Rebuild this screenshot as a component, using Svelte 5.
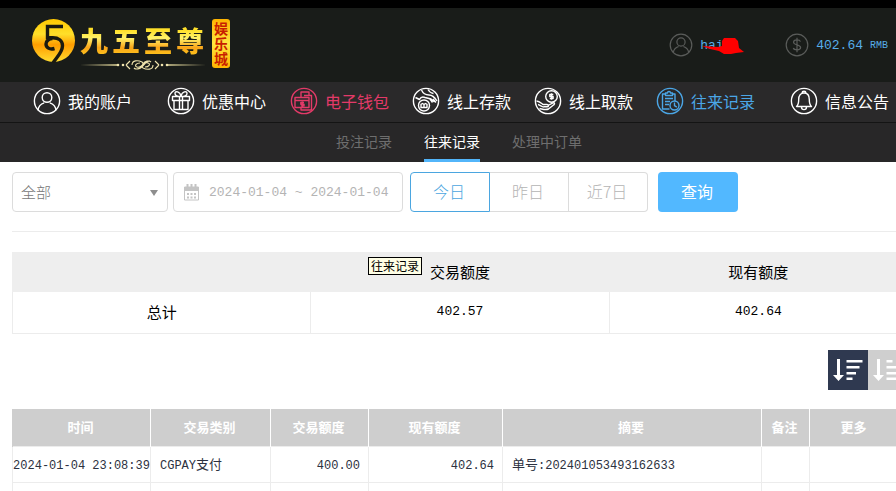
<script>
  const nav = [
    { icon: 'user', label: '我的账户' },
    { icon: 'gift', label: '优惠中心', wide: true },
    { icon: 'wallet', label: '电子钱包', tone: 'pink' },
    { icon: 'deposit', label: '线上存款' },
    { icon: 'withdraw', label: '线上取款' },
    { icon: 'record', label: '往来记录', tone: 'blue' },
    { icon: 'bell', label: '信息公告', wide: true }
  ];
  const tabs = ['投注记录', '往来记录', '处理中订单'];
  const ranges = ['今日', '昨日', '近7日'];
  const heads = ['时间', '交易类别', '交易额度', '现有额度', '摘要', '备注', '更多'];
  let tab = $state('往来记录');
  let range = $state('今日');
  let order = $state('desc');
  let dates = $state('2024-01-04 ~ 2024-01-04');
</script>

{#snippet glyph(name)}
  <svg class="icon" viewBox="0 0 28 28" aria-hidden="true">
    <circle cx="14" cy="14" r="12.6" />
    {#if name === 'user'}
      <circle cx="14" cy="10.5" r="4.8" />
      <path d="M5 23.200c.4-4 2.600-6.200 6.200-7.400M23 23.200c-.4-4-2.600-6.200-6.200-7.400" />
    {:else if name === 'gift'}
      <path d="M5.500 9.500h17v4h-17zM7 13.500h14v9H7zM12.500 9.500v13M15.500 9.500v13M14 9.500c-3.500 0-6-.8-6-3 0-3 5-2 6 2.500M14 9.500c3.500 0 6-.8 6-3 0-3-5-2-6 2.500" />
    {:else if name === 'wallet'}
      <path d="M5 10.500h14v10H5zM5 13.500h14M11 10.500V5h8v3.500M14 8.500h7.500v13M11 20.500V23h10.500v-2M14 15.500h-3.200v1.700H14v1.700h-3.200M12.400 14.500v5.500" />
    {:else if name === 'deposit'}
      <circle cx="12" cy="18.500" r="5.500" />
      <path d="M9 20.500v-3.200l1.500-.8 1.500 1 1.500-1 1.500.8v3.200zM12 17.500v3M3.500 10.500l4 2c1.500-3 3-3 5.500-2l6 1.500 3.500 3M9.500 3c1.500 3.500 4 5 7.500 5s5.500 2 8 6M16 2.500c1 2 3 3.500 5.500 4M18 12l2.500 3.500M21 12l3 3.500" />
    {:else if name === 'withdraw'}
      <circle cx="17.500" cy="9.500" r="5.800" />
      <path d="M19.300 7.500h-3.500v2h3.300v2h-3.300M17.500 6.300v6.400M2.500 14c2.500 0 4 1.500 6.500 3.500h4c2 0 2 2.300 0 2.300h-3M14 18.500l5-2.700c1.700-.5 2 1.200.8 2L14.500 22c-3 1.500-6 0-9-.5M4 17.500c2 .5 3.500 2.500 6 2.500" />
    {:else if name === 'record'}
      <path d="M13.500 22H6.500V7h3M16 7h3v7M9.500 8.500V6h2c0-2 3-2 3 0h2v2.500zM9 11.500h8M9 14.500h5M9 17.500h4" />
      <circle cx="18.500" cy="18.500" r="4.500" />
      <path d="M18.500 15.500v3.200l2.300 1.500" />
    {:else if name === 'bell'}
      <path d="M12 6c.2-2.400 3.800-2.400 4 0M6.500 19.500c1.700-1.500 2.200-3.500 2.200-7C8.700 8.500 10.800 6 14 6s5.300 2.500 5.300 6.500c0 3.500.5 5.500 2.200 7zM11.500 20c0 3.500 5 3.500 5 0" />
    {:else if name === 'money'}
      <path d="M18 10c-.8-2.500-8-2.800-8 .7 0 3.800 8.200 2.500 8.200 6.300 0 3.500-7.700 3.300-8.500.5M14 5.500v17" />
    {/if}
  </svg>
{/snippet}

<div class="app">
  <header>
    <a class="logo" href="#home" aria-label="九五至尊娱乐城">
      <svg class="coin" viewBox="0 0 44 44" aria-hidden="true">
        <defs>
          <linearGradient id="gold" x1="0" y1="0" x2="0" y2="1">
            <stop offset="0" stop-color="#ffc800" />
            <stop offset=".35" stop-color="#ffdf2a" />
            <stop offset=".6" stop-color="#ff9d00" />
            <stop offset="1" stop-color="#ffdc30" />
          </linearGradient>
        </defs>
        <circle cx="21.500" cy="21.500" r="21.500" fill="url(#gold)" />
        <path d="M31 7.500H15.500v11.300h5.300c5.500 0 9.700 2.800 9.700 8 0 6.700-6 11.500-9.500 17.200" fill="none" stroke="#1b1a10" stroke-width="3.400" />
        <path d="M22.500 29.500c-5 1.500-8.500-1-8.500-4.500 0-3 3-5.500 6.500-5.500" fill="none" stroke="#1b1a10" stroke-width="3.400" />
      </svg>
      <div class="brand">
        <div class="name">{#each '九五至尊' as c}<span>{c}</span>{/each}</div>
        <svg class="flourish" viewBox="0 0 126 12" aria-hidden="true">
          <path d="M0 6l38-.8v1.600zM126 6l-40-.8v1.600z" fill="#e9dda0" />
          <path d="M46 6l4-4M46 6l4 4M79 6l-4-4M79 6l-4 4M52 6c0-5 6-5 10-3 3 2-2 6-5 5s-1-4 3-4M73 6c0 5-6 5-10 3-3-2 2-6 5-5s1 4-3 4M57 10c6 1 7-8 13-8M54 9c2 2 6 1 8-2M71 3c-2-2-6-1-8 2" fill="none" stroke="#efe3ac" stroke-width="1.100" />
          <circle cx="38" cy="6" r="1.300" fill="#efe3ac" /><circle cx="43" cy="6" r="1.300" fill="#efe3ac" />
          <circle cx="82" cy="6" r="1.300" fill="#efe3ac" /><circle cx="87" cy="6" r="1.300" fill="#efe3ac" />
        </svg>
      </div>
      <div class="seal">娱乐城</div>
    </a>
    <div class="account">
      <a href="#me" class="who">
        {@render glyph('user')}
        <span class="num big">hai</span>
        <svg class="scribble" viewBox="0 0 42 18" aria-hidden="true"><path d="M0 8l16 1 4-1V3l2-3h11l3 3 1 7 5 4-8 1-5 1H22l-5-3-9-2z" fill="#f00" /></svg>
      </a>
      <a href="#balance" class="money">
        {@render glyph('money')}
        <span class="num big">402.64</span><span class="num unit">RMB</span>
      </a>
    </div>
  </header>

  <nav class="main-nav">
    {#each nav as item}
      <a href="#{item.icon}" class={[item.tone, item.wide && 'wide']}>
        {@render glyph(item.icon)}<span>{item.label}</span>
      </a>
    {/each}
  </nav>

  <nav class="sub-nav">
    {#each tabs as t}
      <a href="#{t}" class:active={tab === t} onclick={() => (tab = t)}>{t}</a>
    {/each}
  </nav>

  <main>
    <div class="content">
      <form class="filters" onsubmit={(e) => e.preventDefault()}>
        <div class="pick">
          <select aria-label="交易类别"><option>全部</option></select>
          <svg viewBox="0 0 8 6" aria-hidden="true"><path d="M0 0h8L4 6z" fill="#8e8e8e" /></svg>
        </div>
        <label class="dates">
          <svg viewBox="0 0 17 17" aria-hidden="true">
            <path d="M1.500 3h14v13h-14z" fill="none" stroke="#c4c4c4" />
            <path d="M1 3h15v4H1zM3.500 0h2v4h-2zM7.500 0h2v4h-2zM11.500 0h2v4h-2z" fill="#c4c4c4" />
            <path d="M4 9h2v2H4zM7.500 9h2v2h-2zM11 9h2v2h-2zM4 12.500h2v2H4zM7.500 12.500h2v2h-2zM11 12.500h2v2h-2z" fill="#c4c4c4" />
          </svg>
          <input type="text" class="num" aria-label="日期" bind:value={dates} />
        </label>
        <div class="ranges">
          {#each ranges as r}
            <button type="button" class:on={range === r} onclick={() => (range = r)}>{r}</button>
          {/each}
        </div>
        <button class="query" type="submit">查询</button>
      </form>

      <div class="summary">
        <table>
          <thead><tr><th aria-label="项目"></th><th>交易额度</th><th>现有额度</th></tr></thead>
          <tbody><tr><td>总计</td><td class="num">402.57</td><td class="num">402.64</td></tr></tbody>
        </table>
        <div class="tip" role="tooltip">往来记录</div>
      </div>

      <div class="sort">
        <button type="button" aria-label="降序" class:on={order === 'desc'} onclick={() => (order = 'desc')}>
          <svg viewBox="0 0 40 40"><path d="M9 9h3v16h4l-5.500 6L5 25h4zM18.500 10h16v2.500h-16zM18.500 16h13v2.500h-13zM18.500 22h9.500v2.500h-9.500zM18.500 27.500h6V30h-6z" fill="#fff" /></svg>
        </button>
        <button type="button" aria-label="升序" class:on={order === 'asc'} onclick={() => (order = 'asc')}>
          <svg viewBox="0 0 40 40"><path d="M9 9h3v16h4l-5.500 6L5 25h4zM18.500 10h6v2.500h-6zM18.500 16H28v2.500h-9.500zM18.500 22h13v2.500h-13zM18.500 27.500h16V30h-16z" fill="#fff" /></svg>
        </button>
      </div>

      <table class="records">
        <colgroup>
          <col class="c-time" /><col class="c-type" /><col class="c-amount" /><col class="c-balance" /><col class="c-note" /><col class="c-mark" /><col />
        </colgroup>
        <thead><tr>{#each heads as h}<th>{h}</th>{/each}</tr></thead>
        <tbody>
          <tr>
            <td class="time"><span class="num">2024-01-04 23:08:39</span></td>
            <td><span class="num">CGPAY</span>支付</td>
            <td class="right"><span class="num">400.00</span></td>
            <td class="right"><span class="num">402.64</span></td>
            <td>单号<span class="num">:202401053493162633</span></td>
            <td></td>
            <td></td>
          </tr>
          <tr>{#each heads as _}<td></td>{/each}</tr>
        </tbody>
      </table>
    </div>
  </main>
</div>

<style>
  :global(body) { margin: 0; background: #fff; }
  .app {
    height: 100vh;
    display: flex;
    flex-direction: column;
    font-family: "Noto Sans CJK SC", sans-serif;
    color: #000;
  }
  .app * { box-sizing: border-box; }
  a { color: inherit; text-decoration: none; }
  button, select, input { font: inherit; }
  .num { font-family: "Liberation Mono", monospace; font-weight: 400; }
  .icon {
    flex: none;
    width: 28px;
    height: 28px;
    fill: none;
    stroke: currentColor;
    stroke-width: 1.4;
    stroke-linejoin: round;
  }

  header {
    display: flex;
    justify-content: space-between;
    align-items: center;
    height: 82px;
    flex: none;
    padding: 0 8px 0 32px;
    background: #191c19;
    border-top: 8px solid #000;
  }
  .logo { display: flex; align-items: flex-start; height: 52px; }
  .coin { width: 44px; height: 44px; }
  .brand { padding: 2px 6px 0 4px; }
  .name {
    display: flex;
    gap: 4px;
    font-size: 28px;
    font-weight: 900;
    line-height: 38px;
  }
  .name span {
    background: linear-gradient(#ffe02a 25%, #fff36a 45%, #f9a51a 70%, #ffd21c);
    -webkit-background-clip: text;
    background-clip: text;
    color: transparent;
  }
  .flourish { display: block; width: 126px; height: 12px; }
  .seal {
    width: 18px;
    height: 49px;
    padding: 2px;
    border-radius: 3px;
    background: linear-gradient(#ffb400, #ffe640 50%, #ffb400);
    color: #c81e00;
    font-size: 14px;
    font-weight: 700;
    line-height: 15px;
    word-break: break-all;
  }
  .account { display: flex; gap: 42px; color: #57ade8; }
  .account a { display: flex; align-items: center; gap: 7px; position: relative; }
  .account .icon { width: 24px; height: 24px; color: #5a5c5a; }
  .who { width: 74px; }
  .scribble { position: absolute; left: 33px; top: 5px; width: 42px; height: 18px; }
  .big { font-size: 13px; }
  .unit { font-size: 10px; }

  .main-nav {
    display: flex;
    align-items: center;
    gap: 23px;
    height: 41px;
    flex: none;
    padding: 0 8px 2px 33px;
    background: #2a292a;
    border-bottom: 1px solid #141414;
    color: #fff;
    font-size: 16px;
    line-height: 24px;
    white-space: nowrap;
  }
  .main-nav a { display: flex; align-items: center; gap: 7px; }
  .main-nav .wide { margin: 0 1px 0 12px; }
  .main-nav .pink { color: #e33a68; }
  .main-nav .blue { color: #4ba6e6; }

  .sub-nav {
    display: flex;
    justify-content: center;
    gap: 32px;
    height: 39px;
    flex: none;
    padding-left: 22px;
    background: #282728;
    color: #6e6e6e;
    font-size: 14px;
    line-height: 37px;
  }
  .sub-nav a { height: 39px; }
  .sub-nav .active { color: #fff; border-bottom: 3px solid #52b5fa; }

  main { flex: 1; min-height: 0; overflow: auto; scrollbar-width: none; padding-left: 12px; }
  .content { min-width: 896px; }

  .filters {
    display: flex;
    padding: 10px 0 19px;
    border-bottom: 1px solid #ececec;
    font-size: 16px;
    font-weight: 300;
  }
  .pick { position: relative; width: 156px; margin-right: 5px; }
  .pick select {
    appearance: none;
    width: 100%;
    height: 40px;
    padding: 0 8px 2px;
    border: 1px solid #dcdcdc;
    border-radius: 4px;
    background: #fff;
    color: #777;
    font-size: 15px;
  }
  .pick svg { position: absolute; right: 10px; top: 18px; width: 8px; height: 6px; }
  .dates {
    display: flex;
    align-items: center;
    gap: 9px;
    width: 230px;
    height: 40px;
    margin-right: 7px;
    padding: 0 9px;
    border: 1px solid #dcdcdc;
    border-radius: 4px;
  }
  .dates svg { width: 17px; height: 17px; flex: none; }
  .dates input {
    flex: 1;
    min-width: 0;
    padding: 0;
    border: 0;
    outline: 0;
    background: none;
    color: #b4b4b4;
    font-size: 13px;
  }
  .ranges { display: flex; width: 238px; margin-right: 10px; }
  .ranges button {
    flex: 1;
    height: 40px;
    padding: 0 2px 2px 0;
    border: 1px solid #dcdcdc;
    border-left: 0;
    background: #fff;
    color: #b4b4b4;
    font-size: 16px;
  }
  .ranges button:first-child { border-left: 1px solid #dcdcdc; border-radius: 4px 0 0 4px; }
  .ranges button:last-child { border-radius: 0 4px 4px 0; }
  .ranges .on, .ranges .on:first-child { border-color: #4ba6e0; color: #4ba6e0; }
  .query {
    width: 80px;
    height: 40px;
    padding: 0 2px 2px 0;
    border: 0;
    border-radius: 4px;
    background: #52b8ff;
    color: #fff;
    font-weight: 400;
  }

  table { width: 100%; border-collapse: collapse; table-layout: fixed; }
  .summary { position: relative; margin-top: 20px; font-size: 15px; text-align: center; }
  .summary th { height: 39px; padding: 0 0 2px; border: 1px solid #eee; background: #eee; font-weight: 400; }
  .summary td { height: 42px; padding: 0 0 2px; border: 1px solid #ececec; }
  .summary td.num { font-size: 13px; }
  .tip {
    position: absolute;
    left: 356px;
    top: 5px;
    padding: 0 2px;
    border: 1px solid #000;
    background: #ffffe6;
    color: #000;
    font-size: 12px;
    line-height: 16px;
  }

  .sort { display: flex; justify-content: flex-end; padding: 16px 0 19px; }
  .sort button { width: 40px; height: 40px; padding: 0; border: 0; background: #cfcfcf; }
  .sort .on { background: #2f3950; }
  .sort svg { display: block; width: 40px; height: 40px; }

  .records { font-size: 13px; color: #2c3140; }
  .c-time { width: 138px; }
  .c-type { width: 120px; }
  .c-amount { width: 98px; }
  .c-balance { width: 134px; }
  .c-note { width: 259px; }
  .c-mark { width: 48px; }
  .records th {
    height: 37px;
    padding: 0 2px 2px 0;
    background: #cecece;
    border-right: 1px solid #fff;
    color: #fff;
    font-weight: 700;
  }
  .records th:first-child { border-left: 1px solid #cecece; }
  .records th:last-child { padding-right: 10px; }
  .records td { height: 36px; padding: 0 8px 2px 9px; border: 1px solid #ececec; white-space: nowrap; }
  .records .num { font-size: 12px; }
  .records .right { text-align: right; }
  .records .time { padding: 0 0 2px; text-align: center; }
</style>
